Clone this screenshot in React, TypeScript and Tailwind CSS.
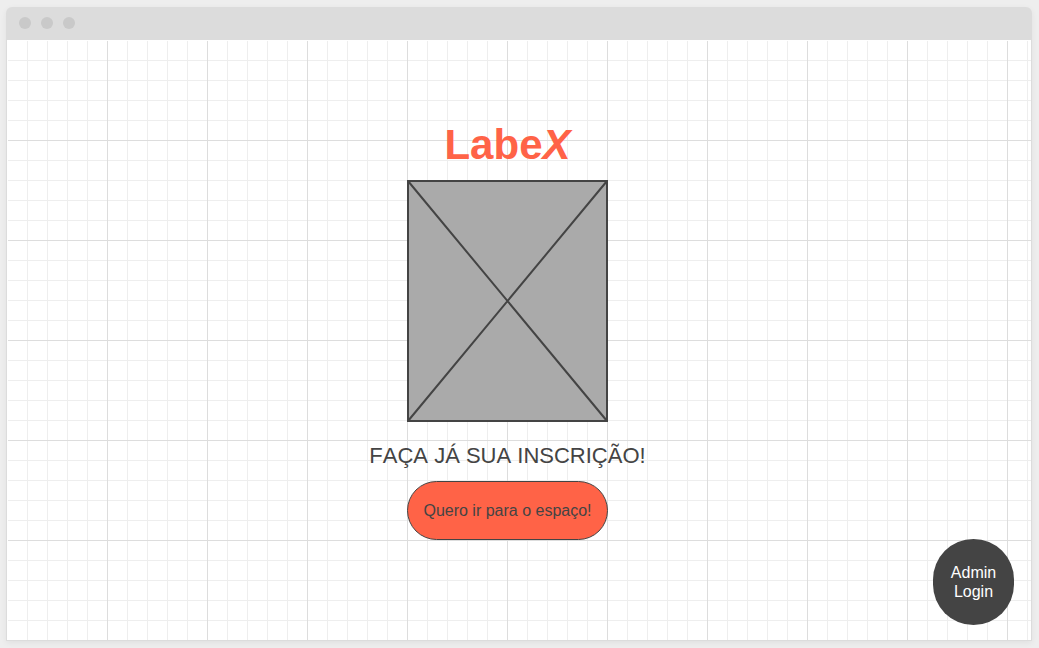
function WindowBar() {
  return (
    <header className="flex h-[33px] items-center gap-2.5 rounded-t-md bg-[#dcdcdc] px-[13px] pb-0.5">
      <span className="size-3 rounded-full bg-[#c9c9c9]" />
      <span className="size-3 rounded-full bg-[#c9c9c9]" />
      <span className="size-3 rounded-full bg-[#c9c9c9]" />
    </header>
  );
}

function ImagePlaceholder() {
  return (
    <div className="h-[242px] w-[201px] border-2 border-[#444444] bg-[#aaaaaa]">
      <svg
        className="block size-full overflow-visible"
        viewBox="0 0 197 238"
        preserveAspectRatio="none"
        fill="none"
        stroke="#444444"
        strokeWidth="2"
        aria-hidden="true"
      >
        <path d="M-1 -1 L198 239 M198 -1 L-1 239" />
      </svg>
    </div>
  );
}

export default function App() {
  return (
    <div className="flex min-h-screen flex-col bg-[#eeeeee] p-[7px] pl-1.5 font-['Liberation_Sans',Arial,sans-serif] text-[#444444] [font-kerning:none]">
      <div className="flex grow flex-col rounded-t-md shadow-[0_2px_6px_rgba(0,0,0,0.06)]">
        <WindowBar />
        <main className="relative flex grow flex-col border border-t-0 border-[#dcdcdc] bg-white pt-px pl-px">
          <div className="flex grow flex-col items-center bg-[linear-gradient(to_right,transparent_99px,#dddddd_99px),linear-gradient(to_bottom,transparent_99px,#dddddd_99px),linear-gradient(to_right,transparent_19px,#eeeeee_19px),linear-gradient(to_bottom,transparent_19px,#eeeeee_19px)] bg-[size:100px_100px,100px_100px,20px_20px,20px_20px] pt-20 pr-6">
            <h1 className="mb-[11px] text-[42px] leading-[48px] font-bold text-[#ff6347]">
              Labe<em>X</em>
            </h1>
            <ImagePlaceholder />
            <p className="mt-5 text-[22px] leading-7">FAÇA JÁ SUA INSCRIÇÃO!</p>
            <button
              type="button"
              className="mt-[11px] h-[59px] w-[201px] rounded-[30px] border border-[#444444] bg-[#ff6347] text-base whitespace-nowrap"
            >
              Quero ir para o espaço!
            </button>
          </div>
          <button
            type="button"
            className="absolute right-[17px] bottom-[15px] h-[86px] w-[81px] rounded-[43px] bg-[#444444] text-base leading-[19px] text-white"
          >
            Admin
            <br />
            Login
          </button>
        </main>
      </div>
    </div>
  );
}
